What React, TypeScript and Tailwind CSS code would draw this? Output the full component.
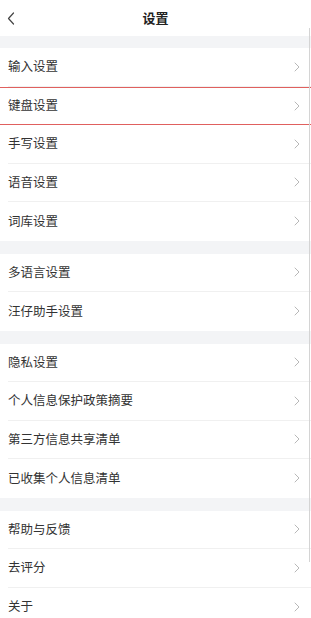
const GROUPS: string[][] = [
  ["输入设置", "键盘设置", "手写设置", "语音设置", "词库设置"],
  ["多语言设置", "汪仔助手设置"],
  ["隐私设置", "个人信息保护政策摘要", "第三方信息共享清单", "已收集个人信息清单"],
  ["帮助与反馈", "去评分", "关于"],
];

const HIGHLIGHT = "键盘设置";

function Chevron() {
  return (
    <svg width="6" height="10" viewBox="0 0 6 10" fill="none" className="shrink-0">
      <path d="M1 1l4 4-4 4" stroke="#b8b8b8" strokeWidth="1" strokeLinecap="round" strokeLinejoin="round" />
    </svg>
  );
}

function SettingRow({ label, last }: { label: string; last: boolean }) {
  const highlighted = label === HIGHLIGHT;
  return (
    <div
      className={`flex h-[38.5px] items-center bg-white pl-2 ${
        highlighted ? "border-y-[1.5px] border-[#e0605e]" : ""
      }`}
    >
      <div
        className={`flex h-full flex-1 items-center justify-between pr-[11px] ${
          last || highlighted ? "" : "border-b border-[#f0f0f0]"
        }`}
      >
        <span className="text-[12.5px] text-[#333333]">{label}</span>
        <Chevron />
      </div>
    </div>
  );
}

export default function App() {
  return (
    <div
      className="relative h-[618px] w-[311px] overflow-hidden bg-white"
      style={{ fontFamily: '"Noto Sans CJK SC", "Noto Sans", sans-serif' }}
    >
      <header className="relative flex h-9 items-center justify-center bg-white">
        <svg width="8" height="13" viewBox="0 0 8 13" fill="none" className="absolute left-[7px] top-3">
          <path d="M6.5 1L1.5 6.5l5 5.5" stroke="#444" strokeWidth="1.2" strokeLinecap="round" strokeLinejoin="round" />
        </svg>
        <h1 className="text-[13px] font-bold text-[#222222]">设置</h1>
      </header>

      <div className="flex flex-col bg-[#f3f4f6]">
        {GROUPS.map((group, gi) => (
          <div key={gi} className={gi === 0 ? "pt-3" : "pt-[13px]"}>
            {group.map((label, i) => (
              <SettingRow key={label} label={label} last={i === group.length - 1} />
            ))}
          </div>
        ))}
      </div>

      <div className="absolute right-[1px] top-[28px] h-[534px] w-px bg-[#d4d4d4]" />
    </div>
  );
}
